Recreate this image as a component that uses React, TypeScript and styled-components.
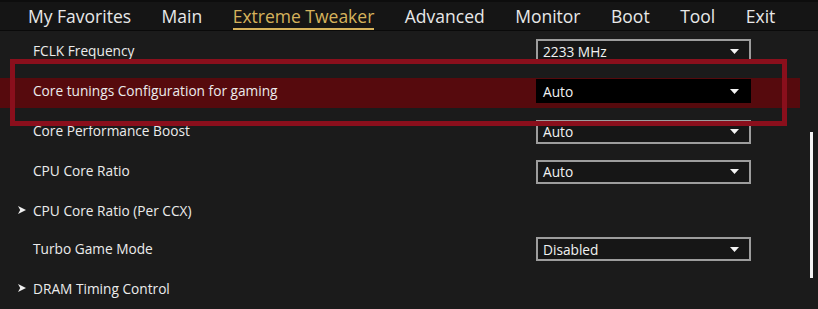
import React from "react";
import styled, { createGlobalStyle } from "styled-components";

const Global = createGlobalStyle`
  html, body { margin: 0; padding: 0; background: #1b1b1b; }
  body { width: 818px; height: 309px; overflow: hidden; }
`;

const Screen = styled.div`
  width: 818px;
  height: 309px;
  background: #1b1b1b;
  font-family: "Open Sans", "Noto Sans", sans-serif;
  color: #eeeeee;
  position: relative;
  overflow: hidden;
`;

const NavBar = styled.nav`
  height: 31px;
  background: #151515;
  border-top: 2px solid #0d0d0d;
  border-bottom: 1px solid #0a0a0a;
  box-sizing: border-box;
  display: flex;
  align-items: flex-start;
  padding-left: 28px;
  gap: 30.5px;
`;

const NavItem = styled.div<{ $active?: boolean }>`
  font-size: 17.5px;
  line-height: 24px;
  padding-top: 2px;
  color: ${(p) => (p.$active ? "#d6b35c" : "#e8e8e8")};
  border-bottom: 2px solid ${(p) => (p.$active ? "#d6b35c" : "transparent")};
  white-space: nowrap;
`;

const List = styled.div`
  display: flex;
  flex-direction: column;
  padding-top: 1px;
`;

const Row = styled.div<{ $h: number }>`
  position: relative;
  height: ${(p) => p.$h}px;
  display: flex;
  align-items: center;
  padding-left: 33px;
  padding-right: 67px;
`;

const SelectFill = styled.div`
  position: absolute;
  left: 0;
  width: 800px;
  top: 8px;
  bottom: 4px;
  background: #560a0d;
`;

const Outline = styled.div`
  position: absolute;
  left: 10px;
  top: -11px;
  width: 777px;
  height: 67px;
  box-sizing: border-box;
  border: 5px solid #8a0f1c;
  pointer-events: none;
  z-index: 3;
`;

const Label = styled.div`
  position: relative;
  z-index: 1;
  flex: 1;
  font-size: 13.7px;
  color: #ececec;
  white-space: nowrap;
  margin-top: -2px;
`;

const Arrow = styled.svg`
  position: absolute;
  left: 18px;
  top: 50%;
  margin-top: -5px;
  width: 8px;
  height: 8px;
`;

const Select = styled.div<{ $focus?: boolean }>`
  position: relative;
  z-index: 1;
  width: 215px;
  height: 24px;
  box-sizing: border-box;
  border: 2px solid ${(p) => (p.$focus ? "#000" : "#9d9d9d")};
  background: ${(p) => (p.$focus ? "#000" : "#161616")};
  display: flex;
  align-items: center;
  justify-content: space-between;
  padding: 0 10px 0 5px;
  font-size: 13.7px;
  color: #f2f2f2;
`;

const Caret = styled.svg`
  width: 9px;
  height: 5px;
`;

const ScrollBar = styled.div`
  position: absolute;
  left: 810px;
  top: 132px;
  width: 3px;
  height: 146px;
  background: #f4f4f4;
`;

type Item = { label: string; value?: string; h: number; arrow?: boolean; selected?: boolean };

const items: Item[] = [
  { label: "FCLK Frequency", value: "2233 MHz", h: 38 },
  { label: "Core tunings Configuration for gaming", value: "Auto", h: 42, selected: true },
  { label: "Core Performance Boost", value: "Auto", h: 39 },
  { label: "CPU Core Ratio", value: "Auto", h: 41 },
  { label: "CPU Core Ratio (Per CCX)", h: 38, arrow: true },
  { label: "Turbo Game Mode", value: "Disabled", h: 38 },
  { label: "DRAM Timing Control", h: 42, arrow: true },
];

const tabs = ["My Favorites", "Main", "Extreme Tweaker", "Advanced", "Monitor", "Boot", "Tool", "Exit"];

export default function App() {
  return (
    <Screen>
      <Global />
      <NavBar>
        {tabs.map((t) => (
          <NavItem key={t} $active={t === "Extreme Tweaker"}>
            {t}
          </NavItem>
        ))}
      </NavBar>
      <List>
        {items.map((it) => (
          <Row key={it.label} $h={it.h}>
            {it.selected && <SelectFill />}
            {it.selected && <Outline />}
            {it.arrow && (
              <Arrow viewBox="0 0 8 8">
                <path d="M0 0 L8 4 L0 8 L2.2 4 Z" fill="#f0f0f0" />
              </Arrow>
            )}
            <Label>{it.label}</Label>
            {it.value && (
              <Select $focus={it.selected}>
                <span>{it.value}</span>
                <Caret viewBox="0 0 9 5">
                  <path d="M0 0 H9 L4.5 5 Z" fill="#f4f4f4" />
                </Caret>
              </Select>
            )}
          </Row>
        ))}
      </List>
      <ScrollBar />
    </Screen>
  );
}
